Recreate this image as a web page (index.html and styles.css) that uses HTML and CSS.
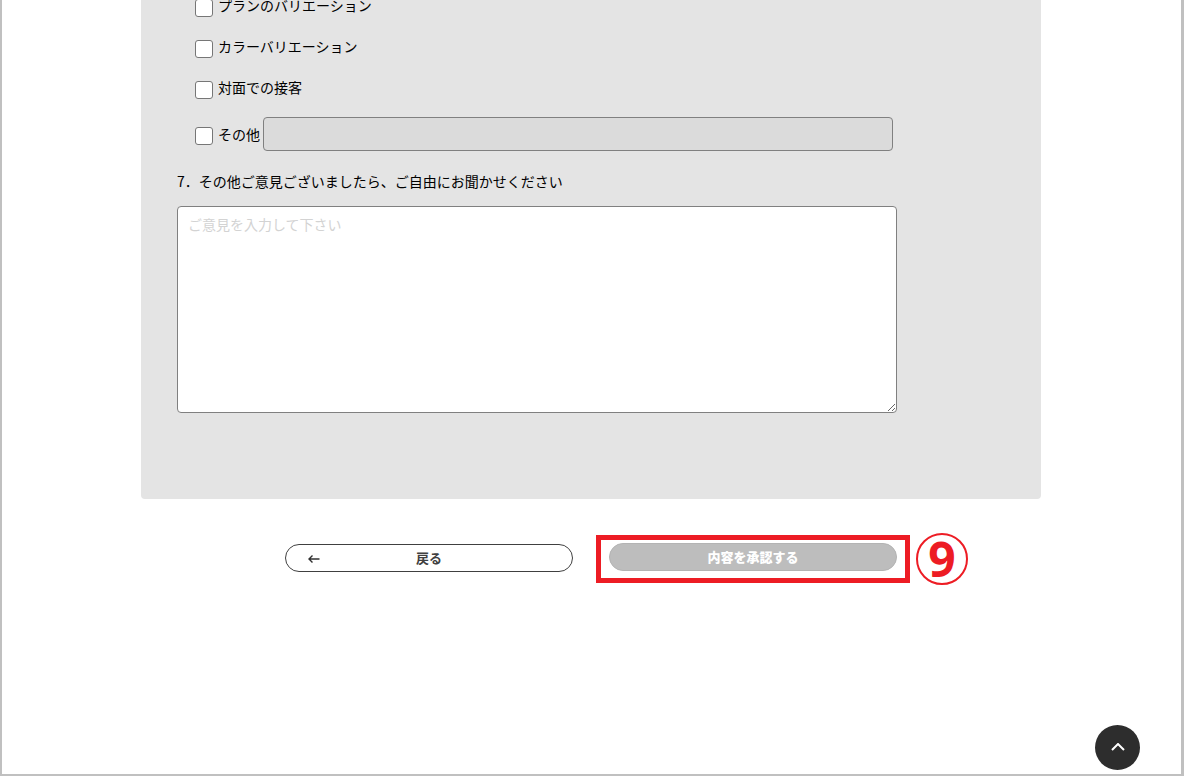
FILE: index.html
```html
<!DOCTYPE html>
<html lang="ja">
<head>
<meta charset="utf-8">
<meta name="viewport" content="width=device-width, initial-scale=1">
<title>アンケート</title>
<link rel="stylesheet" href="styles.css">
</head>
<body>
<form class="page">
  <section class="panel">
    <div class="options">
      <label class="option"><input class="check" type="checkbox"><span>プランのバリエーション</span></label>
      <label class="option"><input class="check" type="checkbox"><span>カラーバリエーション</span></label>
      <label class="option"><input class="check" type="checkbox"><span>対面での接客</span></label>
    </div>
    <div class="other">
      <label class="option"><input class="check" type="checkbox"><span>その他</span></label>
      <input class="other-text" type="text" aria-label="その他の内容" disabled>
    </div>
    <label class="question" for="opinion">7．その他ご意見ございましたら、ご自由にお聞かせください</label>
    <textarea class="opinion" id="opinion" placeholder="ご意見を入力して下さい"></textarea>
  </section>
  <div class="actions">
    <button class="btn btn-back" type="button">
      <svg class="arrow" viewBox="0 0 12 10" aria-hidden="true"><path d="M11.500 5H1.500M4.500 1.500L1 5l3.500 3.500"/></svg>
      戻る
    </button>
    <div class="marked">
      <button class="btn btn-approve" type="submit" disabled>内容を承認する</button>
      <span class="mark-frame"></span>
      <span class="mark-number">9</span>
    </div>
  </div>
  <button class="to-top" type="button" aria-label="ページの先頭へ">
    <svg class="chevron" viewBox="0 0 14 10" aria-hidden="true"><path d="M1 7l6-6 6 6"/></svg>
  </button>
</form>
</body>
</html>
```
FILE: styles.css
```css
* {
  box-sizing: border-box;
}

body {
  margin: 0;
  font-family: "Noto Sans CJK JP", sans-serif;
  font-size: 14px;
  color: #000;
  background: #fff;
}

.page {
  display: flow-root;
  min-height: 100vh;
  padding-right: 1px;
  border: solid #c0c0c0;
  border-width: 0 3px 2px 2px;
}

.panel {
  max-width: 900px;
  margin: -1px auto 0;
  padding: 0 36px 86px;
  background: #e4e4e4;
  border-radius: 0 0 4px 4px;
}

.options {
  display: grid;
  justify-items: start;
  gap: 23px;
  padding-left: 18px;
}

.option {
  display: flex;
  gap: 5px;
  height: 18px;
  line-height: 12px;
  white-space: nowrap;
}

.check {
  flex: none;
  width: 18px;
  height: 18px;
  margin: 0;
  appearance: none;
  background: #fff;
  border: 1px solid #767676;
  border-radius: 3px;
}

.check:checked {
  background: #0075ff;
  border-color: #0075ff;
}

.other {
  display: flex;
  align-items: center;
  gap: 3px;
  max-width: 716px;
  margin-top: 18px;
  padding-left: 18px;
}

.other .option {
  height: 14px;
  line-height: 14px;
}

.other-text {
  flex: 1;
  min-width: 0;
  height: 34px;
  padding: 0 10px;
  font: inherit;
  background: #dbdbdb;
  border: 1px solid #808080;
  border-radius: 4px;
}

.question {
  display: block;
  margin: 19px 0 14px;
  line-height: 22px;
}

.opinion {
  display: block;
  width: 100%;
  max-width: 720px;
  height: 207px;
  padding: 6px 10px;
  font: inherit;
  line-height: 22px;
  background: #fff;
  border: 1px solid #808080;
  border-radius: 4px;
  resize: both;
}

.opinion::placeholder {
  color: #d3d3d3;
}

.actions {
  display: flex;
  align-items: flex-start;
  justify-content: center;
  gap: 36px;
  padding: 44px 0;
}

.btn {
  width: 288px;
  height: 28px;
  padding: 0;
  font-family: inherit;
  font-size: 13px;
  font-weight: 700;
  line-height: 26px;
  border: 1px solid #404040;
  border-radius: 14px;
}

.btn-back {
  position: relative;
  margin-top: 1px;
  color: #404040;
  background: #fff;
}

.arrow {
  position: absolute;
  top: 9px;
  left: 22px;
  width: 12px;
  height: 10px;
  fill: none;
  stroke: #303030;
  stroke-width: 1.4;
}

.marked {
  position: relative;
}

.btn-approve {
  display: block;
  color: #fff;
  font-weight: 900;
  background: #bdbdbd;
  border-color: #b3b3b3;
}

.mark-frame {
  position: absolute;
  inset: -8px -13px -12px;
  border: 5px solid #ed1c24;
  pointer-events: none;
}

.mark-number {
  position: absolute;
  top: -10px;
  left: 307px;
  width: 52px;
  height: 52px;
  font-family: "Open Sans", sans-serif;
  font-size: 48px;
  font-weight: 700;
  line-height: 48px;
  text-align: center;
  color: #ed1c24;
  border: 2px solid #ed1c24;
  border-radius: 50%;
}

.to-top {
  position: fixed;
  right: 44px;
  bottom: 6px;
  display: grid;
  place-items: center;
  width: 45px;
  height: 45px;
  padding: 0;
  background: #2d2d2d;
  border: 0;
  border-radius: 50%;
}

.chevron {
  width: 14px;
  height: 10px;
  fill: none;
  stroke: #fff;
  stroke-width: 2;
}
```
